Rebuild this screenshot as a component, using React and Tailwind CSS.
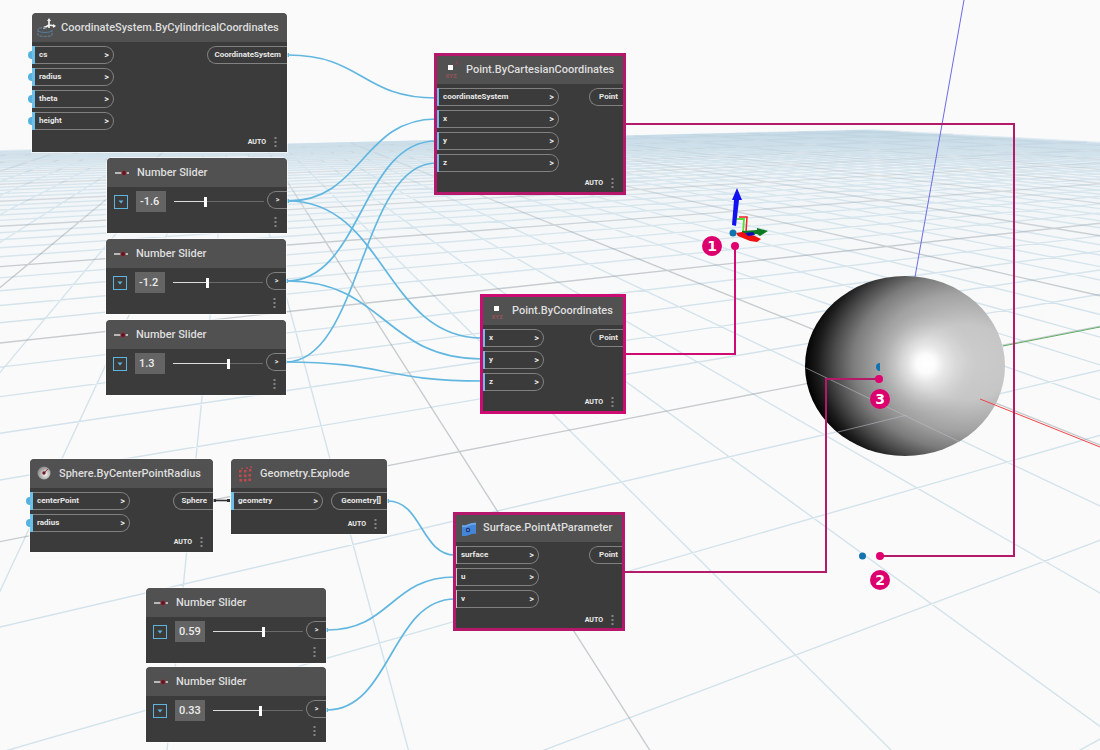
import React, { useState } from "react";

/* ---------- perspective ground grid ---------- */
const ORIGIN = [917, 488];
const VANISH_A = [232, 95];
const VANISH_B = [2280, 95];
const STEP_A = 0.157;
const STEP_B = 0.0707;
const FAR = 45;

function project(u, v) {
  const w = 1 + u + v;
  return [
    (ORIGIN[0] + u * VANISH_A[0] + v * VANISH_B[0]) / w,
    (ORIGIN[1] + u * VANISH_A[1] + v * VANISH_B[1]) / w,
  ];
}

function buildGrid() {
  const minor = [];
  const major = [];
  const add = (n, a, b) => {
    const d = `M${a[0].toFixed(1)} ${a[1].toFixed(1)}L${b[0].toFixed(1)} ${b[1].toFixed(1)}`;
    ((((n - 2) % 5) + 5) % 5 === 0 ? major : minor).push(d);
  };
  for (let j = -50; j <= FAR; j++) {
    const v = j * STEP_B;
    add(j, project(-0.6 - v, v), project(FAR * STEP_A, v));
  }
  for (let i = -10; i <= FAR; i++) {
    const u = i * STEP_A;
    add(i, project(u, Math.max(-0.6 - u, -50 * STEP_B)), project(u, FAR * STEP_B));
  }
  return { minor: minor.join(""), major: major.join("") };
}

const GRID = buildGrid();

function Scene() {
  return (
    <svg className="absolute inset-0 size-full" aria-hidden="true">
      <defs>
        <radialGradient id="shade" gradientUnits="userSpaceOnUse" cx="0" cy="0" r="1" gradientTransform="translate(965 362) scale(160 125)">
          <stop offset="0" stopColor="#cdcdcd" />
          <stop offset="0.3" stopColor="#c6c6c6" />
          <stop offset="0.55" stopColor="#a2a2a2" />
          <stop offset="0.7" stopColor="#7c7c7c" />
          <stop offset="0.82" stopColor="#4a4a4a" />
          <stop offset="0.92" stopColor="#1c1c1c" />
          <stop offset="1" stopColor="#020202" />
        </radialGradient>
        <radialGradient id="shine" gradientUnits="userSpaceOnUse" cx="926" cy="364" r="50">
          <stop offset="0" stopColor="#fff" />
          <stop offset="0.18" stopColor="#fff" stopOpacity="0.95" />
          <stop offset="0.38" stopColor="#fff" stopOpacity="0.55" />
          <stop offset="0.62" stopColor="#fff" stopOpacity="0.24" />
          <stop offset="0.82" stopColor="#fff" stopOpacity="0.07" />
          <stop offset="1" stopColor="#fff" stopOpacity="0" />
        </radialGradient>
        <linearGradient id="haze" gradientUnits="userSpaceOnUse" x1="0" y1="130" x2="0" y2="330">
          <stop offset="0" stopColor="#a9cadd" stopOpacity="0.5" />
          <stop offset="0.2" stopColor="#c4dbe8" stopOpacity="0.2" />
          <stop offset="1" stopColor="#e4eff6" stopOpacity="0" />
        </linearGradient>
        <linearGradient id="minor" gradientUnits="userSpaceOnUse" x1="0" y1="130" x2="0" y2="330">
          <stop offset="0" stopColor="#a3c6da" stopOpacity="0.28" />
          <stop offset="1" stopColor="#a3c6da" stopOpacity="0.45" />
        </linearGradient>
        <linearGradient id="major" gradientUnits="userSpaceOnUse" x1="0" y1="140" x2="0" y2="250">
          <stop offset="0" stopColor="#8ea2b0" stopOpacity="0.12" />
          <stop offset="1" stopColor="#919aa1" stopOpacity="0.48" />
        </linearGradient>
      </defs>
      <path d="M0 150L866 130L1100 143V330H0Z" fill="url(#haze)" />
      <path d={GRID.minor} stroke="url(#minor)" strokeWidth="1.4" fill="none" />
      <path d={GRID.major} stroke="url(#major)" strokeWidth="1.4" fill="none" />
      <path d="M964 0L915 277" stroke="#6a6ae6" />
      <path d="M1003 346L1100 327" stroke="#5fae62" />
      <ellipse cx="905" cy="366" rx="100" ry="90" fill="url(#shade)" />
      <ellipse cx="905" cy="366" rx="100" ry="90" fill="url(#shine)" />
      <path d="M806 368L960 442M838 432L907 415" stroke="#b9bdc2" strokeOpacity="0.6" fill="none" />
      <path d="M980 399L1100 447" stroke="#f04444" />
      {/* manipulator */}
      <path d="M739 217H747L746 232" stroke="#ee2222" strokeWidth="1.5" fill="none" />
      <path d="M737 219H744L743 233" stroke="#55dd33" strokeWidth="1.8" fill="none" />
      <path d="M742 231L757 230L757 228L768 231L760 236L757 234L742 235Z" fill="#0c7a22" />
      <path d="M736 233L742 232L755 236L761 239L757 242L750 241L738 236Z" fill="#ee1111" />
      <path d="M745 233L753 232L755 235L748 236Z" fill="#1010b8" />
      <path d="M732 225L734 200H732L737 188L742 200H739L736 226Z" fill="#1212f0" />
      {/* points */}
      <circle cx="733" cy="233" r="3.5" fill="#1273ad" />
      <circle cx="862.5" cy="556" r="3.5" fill="#1273ad" />
      <path d="M880 363A4 4 0 0 0 880 371Z" fill="#1273ad" />
    </svg>
  );
}

/* ---------- wires ---------- */
const WIRES = [
  [288, 55, 436, 98],
  [288, 201, 436, 119],
  [288, 201, 482, 338],
  [287, 281, 436, 141],
  [287, 281, 482, 359],
  [286, 362, 436, 163],
  [286, 362, 482, 381],
  [388, 501, 455, 555],
  [327, 630, 455, 577],
  [327, 710, 455, 599],
];

function Wires() {
  return (
    <svg className="absolute inset-0 size-full" aria-hidden="true">
      {WIRES.map(([x1, y1, x2, y2], k) => {
        const m = (x1 + x2) / 2;
        return (
          <g key={k}>
            <path d={`M${x1} ${y1}C${m} ${y1} ${m} ${y2} ${x2} ${y2}`} fill="none" stroke="#62b7e0" strokeWidth="1.7" />
            <path d={`M${x1} ${y1 - 2}V${y1 + 2}`} stroke="#62b7e0" strokeWidth="2" />
          </g>
        );
      })}
      <path d="M213 500.5H230" stroke="#333" strokeWidth="1.6" />
      <path d="M213 499H216V502H213ZM227 499H230V502H227Z" fill="#333" />
    </svg>
  );
}

/* ---------- callouts ---------- */
function Callouts() {
  return (
    <>
      <svg className="absolute inset-0 size-full" aria-hidden="true">
        <path d="M625 354H735V246" fill="none" stroke="#cf0a72" strokeWidth="2" />
        <path d="M625 124H1014V556H880M625 572H826V379H879" fill="none" stroke="#b31a69" strokeWidth="2" />
        <circle cx="735" cy="246" r="4" fill="#e0006f" />
        <circle cx="880" cy="556" r="4" fill="#e0006f" />
        <circle cx="879" cy="379" r="4" fill="#e0006f" />
      </svg>
      <Badge place="left-[702px] top-[236px]">1</Badge>
      <Badge place="left-[870px] top-[570px]">2</Badge>
      <Badge place="left-[870px] top-[389px]">3</Badge>
    </>
  );
}

function Badge({ place, children }) {
  return (
    <span className={`absolute flex size-5 items-center justify-center rounded-full bg-[#dc006e] font-['DejaVu_Sans'] text-[14px] leading-none font-bold text-white ${place}`}>
      {children}
    </span>
  );
}

/* ---------- icons ---------- */
const CylinderIcon = () => (
  <svg className="shrink-0" width="20" height="20" viewBox="0 0 20 20" fill="none">
    <path d="M12 10V2M12 7L7 10M12 7L18 8" stroke="#f2f2f2" strokeWidth="1.7" />
    <path d="M12 0L14 3H10ZM19 8L16 10V6ZM6 11L9 10L7 8Z" fill="#f2f2f2" />
    <path d="M9 10C4 9 1 10 1 12V17C2 19 14 19 15 17V12" stroke="#63798a" strokeWidth="1.2" strokeDasharray="3 1" />
    <path d="M1 13C4 15 12 15 15 13" stroke="#4f7ea0" />
  </svg>
);

const CartesianIcon = ({ axes }) => (
  <svg className="shrink-0" width="20" height="20" viewBox="0 0 20 20">
    {axes && <path d="M12 6L15 3M15 3L14 0M15 3L18 5" stroke="#84434d" fill="none" />}
    <rect x="6" y="5" width="5" height="5" fill="#fff" />
    <text x="9" y="18" textAnchor="middle" fontSize="6" fontWeight="700" fontFamily="Roboto, sans-serif" fill="#96525a">XYZ</text>
  </svg>
);

const SphereIcon = () => (
  <svg className="shrink-0" width="20" height="20" viewBox="0 0 20 20">
    <defs>
      <radialGradient id="ball" cx="0.6" cy="0.6" r="0.6">
        <stop offset="0" stopColor="#f4f4f4" />
        <stop offset="1" stopColor="#8d8a8b" />
      </radialGradient>
    </defs>
    <circle cx="9" cy="9" r="6.5" fill="url(#ball)" />
    <path d="M9 9L13 5" stroke="#a33a48" strokeWidth="1" />
    <circle cx="9" cy="9" r="1.7" fill="#6e1724" />
  </svg>
);

const ExplodeIcon = () => (
  <svg className="shrink-0" width="20" height="20" viewBox="0 0 20 20" fill="#c24a4c">
    <path d="M3 6H5.500V8.500H3ZM8 6H10.500V8.500H8ZM13 5H15.500V7.500H13ZM3 10.500H5.500V13H3ZM8 10.500H10.500V13H8ZM12.500 10H15V12.500H12.500ZM3.500 15H6V17.500H3.500ZM8 15H10.500V17.500H8ZM12.500 14.500H15V17H12.500Z" />
    <circle cx="11" cy="4" r="0.900" /><circle cx="15" cy="3" r="0.900" /><circle cx="6" cy="4.500" r="0.900" />
  </svg>
);

const SurfaceIcon = () => (
  <svg className="shrink-0" width="20" height="20" viewBox="0 0 20 20">
    <path d="M3 7C7 9 11 4 17 5V16C12 15 9 19 3 18Z" fill="#4385d6" />
    <path d="M3 7C7 9 11 4 17 5V7C11 6 7 11 3 9Z" fill="#6aa3e6" />
    <circle cx="9" cy="12" r="2.200" fill="#16367c" />
    <circle cx="9" cy="12" r="0.800" fill="#c9dcf5" />
  </svg>
);

const SliderIcon = () => (
  <svg className="shrink-0" width="14" height="8" viewBox="0 0 14 8">
    <path d="M0 4H14" stroke="#e6e6e6" strokeWidth="1.400" />
    <circle cx="9" cy="4" r="2.300" fill="#5a1620" stroke="#8e3440" strokeWidth="0.800" />
  </svg>
);

const Dots = () => (
  <svg width="3" height="11" viewBox="0 0 3 11" fill="#858585" aria-hidden="true">
    <rect x="0.500" y="0" width="2" height="2" /><rect x="0.500" y="4" width="2" height="2" /><rect x="0.500" y="8" width="2" height="2" />
  </svg>
);

/* ---------- nodes ---------- */
function Header({ icon, title, gap }) {
  return (
    <header className={`flex h-[29px] items-center rounded-t-[4px] bg-[#515151] ${gap}`}>
      {icon}
      <h2 className="text-[11px] leading-4 font-medium whitespace-nowrap text-[#dedede]">{title}</h2>
    </header>
  );
}

function InPort({ name, open, bar }) {
  return (
    <li className="relative flex h-[18px]">
      {open && <span className="absolute top-[5px] -left-1 h-2 w-1 rounded-l-full bg-[#57b1de]" />}
      {bar ? <span className="w-[3px] bg-[#6bbfe8]" /> : <span className="w-[3px] border-r border-[#c9c9c9]" />}
      <button className="flex flex-1 items-center justify-between rounded-r-[9px] border border-l-0 border-[#818181] pr-1 pl-1 text-[8px] leading-none font-bold text-[#e8e8e8]">
        <span>{name}</span>
        <span className="text-[9px]">&gt;</span>
      </button>
    </li>
  );
}

function Node({ place, icon, title, gap, inputs, portWidth, output, outWidth, frame, open, bar = true }) {
  return (
    <section className={`absolute flex flex-col rounded-t-[5px] bg-[#3b3b3b] ${place} ${frame ? "" : "shadow-[0_0_0_1px_rgba(255,255,255,0.6)]"}`}>
      <Header icon={icon} title={title} gap={gap} />
      <div className="flex justify-between pt-1">
        <ul className={`flex flex-col gap-1 ${portWidth}`}>
          {inputs.map((n) => <InPort key={n} name={n} open={open} bar={bar} />)}
        </ul>
        <button className={`h-[18px] rounded-l-[9px] border border-r-0 border-[#818181] pr-[6px] text-right text-[8px] leading-none font-bold text-[#e8e8e8] ${outWidth}`}>
          {output}
        </button>
      </div>
      <footer className="mt-auto flex items-center justify-end gap-2 pr-[10px] pb-1">
        <span className="text-[7px] leading-3 font-bold text-[#ececec]">AUTO</span>
        <button aria-label="Node options"><Dots /></button>
      </footer>
      {frame && <span className={`pointer-events-none absolute border-[3px] ${frame}`} />}
    </section>
  );
}

function SliderNode({ place, id, value, start }) {
  const [pos, setPos] = useState(start);
  return (
    <section className={`absolute flex h-[75px] w-[180px] flex-col rounded-t-[5px] bg-[#3b3b3b] shadow-[0_0_0_1px_rgba(255,255,255,0.6)] ${place}`}>
      <Header icon={<SliderIcon />} title="Number Slider" gap="gap-2 pl-2" />
      <div className="flex items-center pt-1">
        <button aria-label="Slider settings" className="ml-[7px] flex size-[14px] items-center justify-center border border-[#5fb4de]">
          <svg width="6" height="4" viewBox="0 0 6 4"><path d="M0.500 0.500H5.500L3 3.500Z" fill="#5fb4de" /></svg>
        </button>
        <input aria-label="Slider value" defaultValue={value} className="ml-[8px] h-[21px] w-[30px] bg-[#646464] pl-1 text-[11px] font-medium text-[#ececec] outline-none" />
        <input
          id={id}
          type="range"
          aria-label="Number Slider"
          min="0"
          max="100"
          value={pos}
          onChange={(e) => setPos(Number(e.target.value))}
          className="ml-[8px] h-[11px] w-[90px] appearance-none bg-[length:100%_1px] bg-center bg-no-repeat [&::-webkit-slider-thumb]:h-[10px] [&::-webkit-slider-thumb]:w-[3px] [&::-webkit-slider-thumb]:appearance-none [&::-webkit-slider-thumb]:bg-white"
          style={{ backgroundImage: `linear-gradient(to right, #dcdcdc ${pos}%, #6a6a6a ${pos}%)` }}
        />
        <button aria-label="Output" className="ml-auto h-[18px] w-5 self-start rounded-l-[9px] border border-r-0 border-[#818181] text-[7px] leading-none font-bold text-[#e0e0e0]">&gt;</button>
      </div>
      <footer className="mt-auto flex justify-end pr-[10px] pb-[5px]">
        <button aria-label="Node options"><Dots /></button>
      </footer>
    </section>
  );
}

export default function App() {
  return (
    <main className="relative min-h-screen w-full overflow-hidden bg-[#fafafa] font-[Roboto,'Liberation_Sans',sans-serif]">
      <Scene />
      <Wires />
      <Node place="left-[32px] top-[13px] h-[139px] w-[255px]" icon={<CylinderIcon />} title="CoordinateSystem.ByCylindricalCoordinates" gap="gap-1 pl-[5px]"
        inputs={["cs", "radius", "theta", "height"]} portWidth="w-[82px]" output="CoordinateSystem" outWidth="w-20" open />
      <SliderNode place="left-[107px] top-[158px]" id="s1" value="-1.6" start={34} />
      <SliderNode place="left-[106px] top-[239px]" id="s2" value="-1.2" start={38} />
      <SliderNode place="left-[106px] top-[320px]" id="s3" value="1.3" start={62} />
      <Node place="left-[436px] top-[55px] h-[138px] w-[188px]" icon={<CartesianIcon axes />} title="Point.ByCartesianCoordinates" gap="gap-1 pl-[6px]"
        inputs={["coordinateSystem", "x", "y", "z"]} portWidth="w-[123px]" output="Point" outWidth="w-[35px]" frame="-inset-[2px] border-[#b5176b]" />
      <Node place="left-[482px] top-[296px] h-[116px] w-[142px]" icon={<CartesianIcon />} title="Point.ByCoordinates" gap="gap-1 pl-[6px]"
        inputs={["x", "y", "z"]} portWidth="w-[62px]" output="Point" outWidth="w-[34px]" frame="-inset-[2px] border-[#cc0c72]" />
      <Node place="left-[30px] top-[459px] h-[93px] w-[183px]" icon={<SphereIcon />} title="Sphere.ByCenterPointRadius" gap="gap-1 pl-[5px]"
        inputs={["centerPoint", "radius"]} portWidth="w-[100px]" output="Sphere" outWidth="w-10" open />
      <Node place="left-[231px] top-[459px] h-[75px] w-[156px]" icon={<ExplodeIcon />} title="Geometry.Explode" gap="gap-1 pl-[5px]"
        inputs={["geometry"]} portWidth="w-[92px]" output="Geometry[]" outWidth="w-14" />
      <Node place="left-[454px] top-[513px] h-[117px] w-[170px]" icon={<SurfaceIcon />} title="Surface.PointAtParameter" gap="gap-1 pl-[5px]"
        inputs={["surface", "u", "v"]} portWidth="w-[85px]" output="Point" outWidth="w-[35px]" frame="-inset-px border-[#b5176b]" bar={false} />
      <SliderNode place="left-[146px] top-[588px]" id="s4" value="0.59" start={56} />
      <SliderNode place="left-[146px] top-[667px]" id="s5" value="0.33" start={53} />
      <Callouts />
    </main>
  );
}
